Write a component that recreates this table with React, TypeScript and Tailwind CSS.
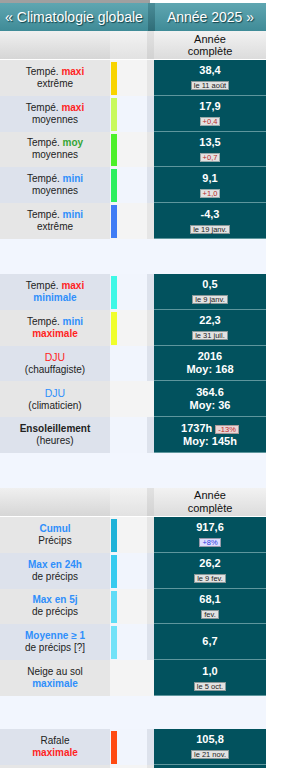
import React from "react";

type Row = {
  label: React.ReactNode;
  bar?: string;
  tone: "g" | "b";
  strip?: boolean;
  value: React.ReactNode;
};

const Red = ({ children }: { children: React.ReactNode }) => (
  <span className="font-bold text-[#ff1f1f]">{children}</span>
);
const Blue = ({ children }: { children: React.ReactNode }) => (
  <span className="font-bold text-[#2f8ffb]">{children}</span>
);
const Green = ({ children }: { children: React.ReactNode }) => (
  <span className="font-bold text-[#34a534]">{children}</span>
);

function Badge({ children, kind = "date" }: { children: React.ReactNode; kind?: "date" | "up" | "blue" | "pink" }) {
  const cls =
    kind === "up"
      ? "bg-[#e2e2e2] text-[#b52a2a] border-[#9aa]"
      : kind === "blue"
      ? "bg-[#dcdcff] text-[#2b3be0] border-[#99a]"
      : kind === "pink"
      ? "bg-[#e8d6d6] text-[#c02a2a] border-[#a99]"
      : "bg-[#e2e2e2] text-[#222] border-[#8a9899]";
  return (
    <span className={`inline-block border px-[2px] text-[7.5px] leading-[7px] font-normal ${cls}`}>
      {children}
    </span>
  );
}

function Val({ v, badge }: { v: string; badge?: React.ReactNode }) {
  return (
    <div className="flex flex-col items-center">
      <div className="text-[11px] font-bold leading-[13px] text-white">{v}</div>
      {badge && <div className="mt-[1px] leading-[9px]">{badge}</div>}
    </div>
  );
}

function Two({ a, b }: { a: React.ReactNode; b: string }) {
  return (
    <div className="text-center text-[11px] font-bold leading-[12.5px] text-white">
      <div>{a}</div>
      <div>{b}</div>
    </div>
  );
}

function DataRow({ r }: { r: Row }) {
  const lab = r.tone === "g" ? "bg-[#e6e6e6]" : "bg-[#dde2ec]";
  const mid = r.tone === "g" ? "bg-[#f4f4f4]" : "bg-[#f1f5fd]";
  const strip = r.strip === false ? mid : lab;
  return (
    <div className="flex h-[35.8px]">
      <div className={`flex w-[110px] items-center justify-center text-center text-[10px] leading-[12px] text-[#222] ${lab}`}>
        <div>{r.label}</div>
      </div>
      <div className={`flex w-[37px] pb-[1px] pl-[1px] pt-[2px] ${mid}`}>
        {r.bar && <div className={`w-[6px] ${r.bar}`} />}
      </div>
      <div className={`w-[7px] ${strip}`} />
      <div className="flex w-[112px] items-center justify-center border-b border-[#5e969d] bg-[#02525e]">
        {r.value}
      </div>
    </div>
  );
}

function SubHeader() {
  return (
    <div className="flex h-[29px] border-b border-white">
      <div className="w-[110px] bg-gradient-to-b from-[#f0f0f0] to-[#d6d6d6]" />
      <div className="w-[37px] bg-gradient-to-b from-[#f3f3f3] to-[#e2e2e2]" />
      <div className="w-[7px] bg-gradient-to-b from-[#e2e2e2] to-[#d2d2d2]" />
      <div className="flex w-[112px] items-center justify-center bg-gradient-to-b from-[#f2f2f2] to-[#dcdcdc] text-center text-[11px] leading-[12.5px] text-[#111]">
        Année
        <br />
        complète
      </div>
    </div>
  );
}

const Spacer = ({ h }: { h: string }) => <div className={`w-[266px] bg-[#f2f6fe] ${h}`} />;

const group1: Row[] = [
  { tone: "g", bar: "bg-[#f8d400]", label: <>Tempé. <Red>maxi</Red><br />extrême</>, value: <Val v="38,4" badge={<Badge>le 11 août</Badge>} /> },
  { tone: "b", bar: "bg-[#c8fa5c]", label: <>Tempé. <Red>maxi</Red><br />moyennes</>, value: <Val v="17,9" badge={<Badge kind="up">+0,4</Badge>} /> },
  { tone: "g", bar: "bg-[#4cf02a]", label: <>Tempé. <Green>moy</Green><br />moyennes</>, value: <Val v="13,5" badge={<Badge kind="up">+0,7</Badge>} /> },
  { tone: "b", bar: "bg-[#2cef5e]", label: <>Tempé. <Blue>mini</Blue><br />moyennes</>, value: <Val v="9,1" badge={<Badge kind="up">+1,0</Badge>} /> },
  { tone: "g", bar: "bg-[#3f7cf5]", label: <>Tempé. <Blue>mini</Blue><br />extrême</>, value: <Val v="-4,3" badge={<Badge>le 19 janv.</Badge>} /> },
];

const group2: Row[] = [
  { tone: "b", bar: "bg-[#3ff8e6]", label: <>Tempé. <Red>maxi</Red><br /><Blue>minimale</Blue></>, value: <Val v="0,5" badge={<Badge>le 9 janv.</Badge>} /> },
  { tone: "g", bar: "bg-[#f0fe2c]", label: <>Tempé. <Blue>mini</Blue><br /><Red>maximale</Red></>, value: <Val v="22,3" badge={<Badge>le 31 juil.</Badge>} /> },
  { tone: "b", label: <><span className="text-[10.5px] text-[#ff1f1f]">DJU</span><br />(chauffagiste)</>, value: <Two a="2016" b="Moy: 168" /> },
  { tone: "g", strip: false, label: <><span className="text-[10.5px] text-[#2f8ffb]">DJU</span><br />(climaticien)</>, value: <Two a="364.6" b="Moy: 36" /> },
  {
    tone: "b",
    label: <><span className="font-bold">Ensoleillement</span><br />(heures)</>,
    value: <Two a={<>1737h <Badge kind="pink">-13%</Badge></>} b="Moy: 145h" />,
  },
];

const group3: Row[] = [
  { tone: "g", bar: "bg-[#1fb2d8]", label: <><Blue>Cumul</Blue><br />Précips</>, value: <Val v="917,6" badge={<Badge kind="blue">+8%</Badge>} /> },
  { tone: "b", bar: "bg-[#36cbef]", label: <><Blue>Max en 24h</Blue><br />de précips</>, value: <Val v="26,2" badge={<Badge>le 9 fev.</Badge>} /> },
  { tone: "g", bar: "bg-[#5edcf6]", label: <><Blue>Max en 5j</Blue><br />de précips</>, value: <Val v="68,1" badge={<Badge>fev.</Badge>} /> },
  { tone: "b", bar: "bg-[#72e2f8]", label: <><Blue>Moyenne ≥ 1</Blue><br />de précips [?]</>, value: <Val v="6,7" /> },
  { tone: "g", strip: false, label: <>Neige au sol<br /><Blue>maximale</Blue></>, value: <Val v="1,0" badge={<Badge>le 5 oct.</Badge>} /> },
];

const group4: Row[] = [
  { tone: "b", bar: "bg-[#ff4a12]", label: <>Rafale<br /><Red>maximale</Red></>, value: <Val v="105,8" badge={<Badge>le 21 nov.</Badge>} /> },
  { tone: "g", label: <></>, value: <></> },
];

export default function App() {
  return (
    <div className="min-h-screen w-[291px] overflow-hidden bg-white font-['Liberation_Sans',Arial,sans-serif]">
      <div className="h-[3px] w-[150px] bg-[#a0a0a0]" />
      <div className="flex h-[28px] text-[14px] text-white [text-shadow:1px_1px_1px_#14434a]">
        <div className="flex w-[148px] items-center justify-center bg-gradient-to-b from-[#5fa6b1] to-[#3f8b97]">
          « Climatologie globale
        </div>
        <div className="w-[7px] bg-gradient-to-b from-[#4a8d98] to-[#2f6d78]" />
        <div className="flex w-[111px] items-center justify-center bg-gradient-to-b from-[#5fa6b1] to-[#3f8b97]">
          Année 2025 »
        </div>
      </div>
      <SubHeader />
      {group1.map((r, i) => <DataRow key={i} r={r} />)}
      <Spacer h="h-[35px]" />
      {group2.map((r, i) => <DataRow key={i} r={r} />)}
      <Spacer h="h-[35px]" />
      <SubHeader />
      {group3.map((r, i) => <DataRow key={i} r={r} />)}
      <Spacer h="h-[33px]" />
      {group4.map((r, i) => <DataRow key={i} r={r} />)}
    </div>
  );
}
